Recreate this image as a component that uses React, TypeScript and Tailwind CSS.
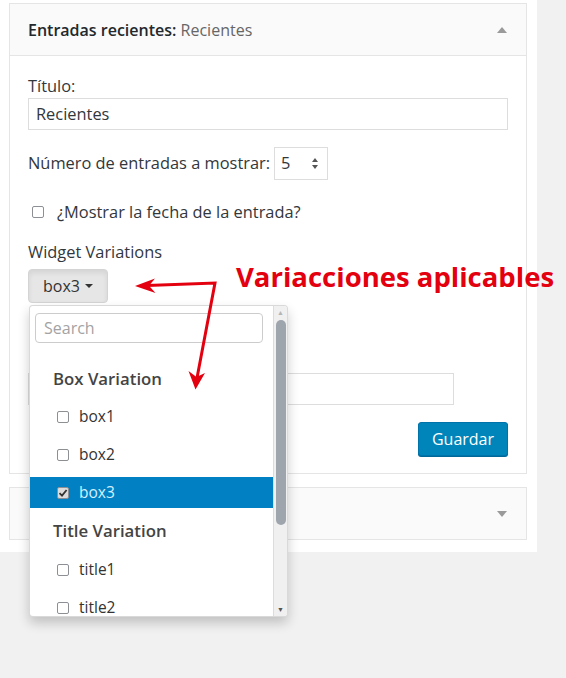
import React from "react"

const font = { fontFamily: '"Open Sans", "Liberation Sans", sans-serif' }

function Checkbox({ checked = false, className = "" }: { checked?: boolean; className?: string }) {
  return (
    <span
      className={`inline-flex items-center justify-center w-[12px] h-[12px] rounded-[2px] border border-[#8c8f94] shrink-0 ${
        checked ? "bg-[#dcdcdc]" : "bg-white"
      } ${className}`}
    >
      {checked && (
        <svg width="10" height="10" viewBox="0 0 10 10">
          <path d="M1.5 5.2 L4 7.6 L8.6 2" fill="none" stroke="#333" strokeWidth="1.8" />
        </svg>
      )}
    </span>
  )
}

function Option({ label, active = false }: { label: string; active?: boolean }) {
  return (
    <div className={`h-[31px] flex items-center pl-[27px] ${active ? "bg-[#0181c3]" : ""}`}>
      <Checkbox checked={active} />
      <span className={`ml-[10px] text-[15.5px] ${active ? "text-[#d5f0ff]" : "text-[#333]"}`}>{label}</span>
    </div>
  )
}

function Dropdown() {
  return (
    <div className="absolute left-[29px] top-[305px] w-[259px] h-[312px] bg-white border border-[rgba(0,0,0,0.15)] rounded-[4px] shadow-[0_6px_12px_rgba(0,0,0,0.2)] overflow-hidden flex">
      <div className="flex-1 flex flex-col">
        <div className="pt-[7px] pl-[5px] pr-[10px]">
          <div className="h-[30px] border border-[#ccc] rounded-[4px] px-[8px] flex items-center text-[16px] text-[#a3a3a3]">
            Search
          </div>
        </div>
        <div className="mt-[20px] flex flex-col gap-[7px]">
          <div className="h-[31px] flex items-center pl-[23px] text-[16.8px] font-semibold text-[#444]">Box Variation</div>
          <Option label="box1" />
          <Option label="box2" />
          <Option label="box3" active />
          <div className="h-[32px] flex items-center pl-[23px] text-[16.8px] font-semibold text-[#444]">Title Variation</div>
          <Option label="title1" />
          <Option label="title2" />
        </div>
      </div>
      <div className="w-[14px] bg-[#f0f0f0] border-l border-[#dcdcdc] flex flex-col items-center">
        <div className="h-[14px] w-full flex items-center justify-center text-[7px] text-[#b5b5b5]">▲</div>
        <div className="w-[10px] h-[205px] rounded-[5px] bg-[#9ea5ad]" />
        <div className="flex-1" />
        <div className="h-[12px] w-full flex items-center justify-center text-[7px] text-[#555]">▼</div>
      </div>
    </div>
  )
}

function Annotation() {
  return (
    <>
      <div className="absolute left-[236px] top-[258px] text-[27.5px] font-bold text-[#e3000f] leading-[38px] whitespace-nowrap">
        Variacciones aplicables
      </div>
      <svg className="absolute left-0 top-0 pointer-events-none" width="566" height="678">
        <polyline points="147,285.5 215,283 197,378" fill="none" stroke="#e3000f" strokeWidth="3" strokeLinejoin="miter" />
        <path d="M135,286 L155,278.5 L149,285.7 L155.5,293 Z" fill="#e3000f" />
        <path d="M195.5,389.5 L188.5,371 L196.5,377 L205,373 Z" fill="#e3000f" />
      </svg>
    </>
  )
}

export default function App() {
  return (
    <div className="relative min-h-[678px] bg-[#f1f1f1] text-[#32373c]" style={font}>
      <div className="w-[537px] bg-white pt-[3px] pl-[9px] pr-[10px] pb-[12px]">
        <div className="border border-[#e5e5e5]">
          <div className="h-[52px] bg-[#fafafa] border-b border-[#e5e5e5] flex items-center pl-[18px] pr-[19px]">
            <span className="text-[16px] font-semibold text-[#23282d]">
              Entradas recientes:
              <span className="font-normal text-[#666]"> Recientes</span>
            </span>
            <span className="ml-auto w-0 h-0 border-l-[5px] border-r-[5px] border-b-[6px] border-l-transparent border-r-transparent border-b-[#9a9a9a]" />
          </div>
          <div className="px-[18px] pt-[19px] pb-[17px] text-[16.4px]">
            <div className="h-[22px] leading-[22px]">Título:</div>
            <div className="mt-[1px] h-[32px] border border-[#ddd] flex items-center px-[7px] text-[16.4px] text-[#32373c]">
              Recientes
            </div>
            <div className="mt-[17px] flex items-center">
              <span>Número de entradas a mostrar:</span>
              <div className="ml-[4px] w-[54px] h-[33px] border border-[#ddd] flex items-center pl-[6px] pr-[9px] text-[16.4px]">
                <span>5</span>
                <span className="ml-auto flex flex-col gap-[3px]">
                  <span className="w-0 h-0 border-l-[3px] border-r-[3px] border-b-[4px] border-l-transparent border-r-transparent border-b-[#555]" />
                  <span className="w-0 h-0 border-l-[3px] border-r-[3px] border-t-[4px] border-l-transparent border-r-transparent border-t-[#555]" />
                </span>
              </div>
            </div>
            <div className="mt-[21px] h-[22px] flex items-center pl-[4px]">
              <Checkbox />
              <span className="ml-[13px]">¿Mostrar la fecha de la entrada?</span>
            </div>
            <div className="mt-[18px] h-[22px] leading-[22px]">Widget Variations</div>
            <div className="mt-[6px] inline-flex items-center h-[34px] px-[14px] rounded-[4px] bg-[#e6e6e6] border border-[#d4d4d4] shadow-[inset_0_3px_5px_rgba(0,0,0,0.08)] text-[16px] text-[#333]">
              box3
              <span className="ml-[5px] w-0 h-0 border-l-[4px] border-r-[4px] border-t-[4px] border-l-transparent border-r-transparent border-t-[#333]" />
            </div>
            <div className="mt-[70px] w-[426px] h-[32px] border border-[#ddd]" />
            <div className="mt-[17px] flex items-center justify-end">
              <div className="h-[34px] w-[90px] flex items-center justify-center rounded-[3px] bg-[#0085ba] border border-[#0073aa] shadow-[0_1px_0_#006799] text-white text-[16px]">
                Guardar
              </div>
            </div>
          </div>
        </div>
        <div className="mt-[13px] h-[53px] border border-[#e5e5e5] bg-[#fafafa] flex items-center pr-[19px]">
          <span className="ml-auto w-0 h-0 border-l-[5px] border-r-[5px] border-t-[6px] border-l-transparent border-r-transparent border-t-[#9a9a9a]" />
        </div>
      </div>
      <Dropdown />
      <Annotation />
    </div>
  )
}
